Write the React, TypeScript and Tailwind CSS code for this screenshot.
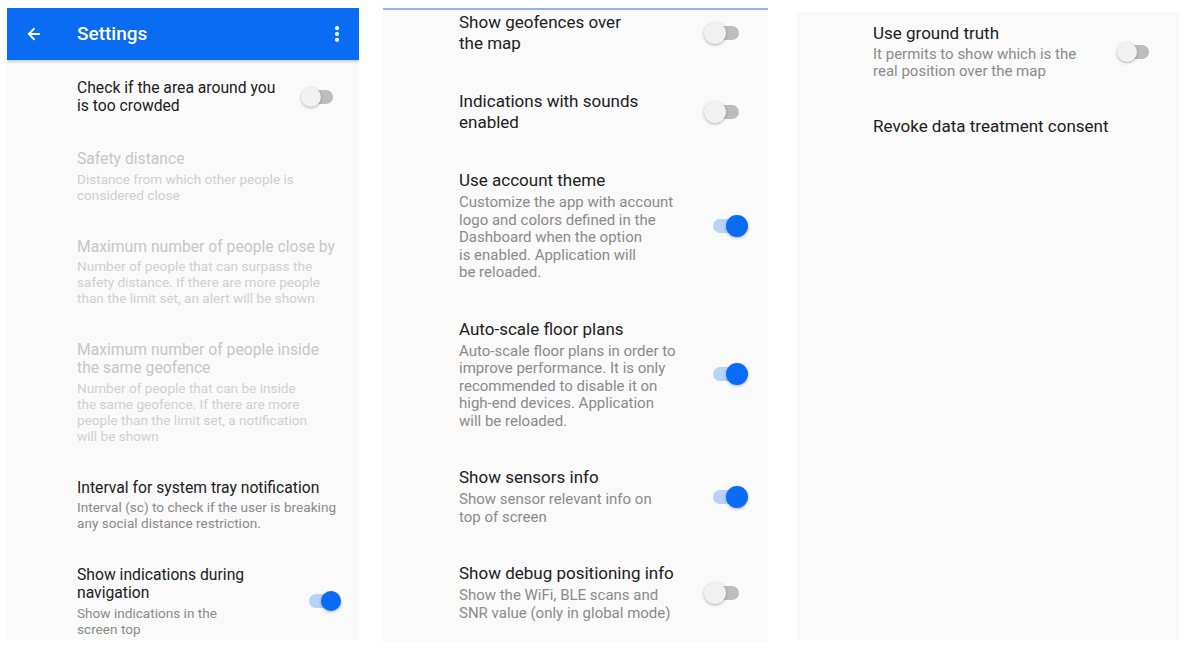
import { ArrowLeft, EllipsisVertical } from "lucide-react";

type Row = {
  title: string[];
  sub?: string[];
  toggle?: "on" | "off";
  disabled?: boolean;
};

const FIRST: Row[] = [
  { title: ["Check if the area around you", "is too crowded"], toggle: "off" },
  {
    title: ["Safety distance"],
    sub: ["Distance from which other people is", "considered close"],
    disabled: true,
  },
  {
    title: ["Maximum number of people close by"],
    sub: [
      "Number of people that can surpass the",
      "safety distance. If there are more people",
      "than the limit set, an alert will be shown",
    ],
    disabled: true,
  },
  {
    title: ["Maximum number of people inside", "the same geofence"],
    sub: [
      "Number of people that can be inside",
      "the same geofence. If there are more",
      "people than the limit set, a notification",
      "will be shown",
    ],
    disabled: true,
  },
  {
    title: ["Interval for system tray notification"],
    sub: ["Interval (sc) to check if the user is breaking", "any social distance restriction."],
  },
  {
    title: ["Show indications during", "navigation"],
    sub: ["Show indications in the", "screen top"],
    toggle: "on",
  },
];

const SECOND: Row[] = [
  { title: ["Show geofences over", "the map"], toggle: "off" },
  { title: ["Indications with sounds", "enabled"], toggle: "off" },
  {
    title: ["Use account theme"],
    sub: [
      "Customize the app with account",
      "logo and colors defined in the",
      "Dashboard when the option",
      "is enabled. Application will",
      "be reloaded.",
    ],
    toggle: "on",
  },
  {
    title: ["Auto-scale floor plans"],
    sub: [
      "Auto-scale floor plans in order to",
      "improve performance. It is only",
      "recommended to disable it on",
      "high-end devices. Application",
      "will be reloaded.",
    ],
    toggle: "on",
  },
  {
    title: ["Show sensors info"],
    sub: ["Show sensor relevant info on", "top of screen"],
    toggle: "on",
  },
  {
    title: ["Show debug positioning info"],
    sub: ["Show the WiFi, BLE scans and", "SNR value (only in global mode)"],
    toggle: "off",
  },
];

const THIRD: Row[] = [
  {
    title: ["Use ground truth"],
    sub: ["It permits to show which is the", "real position over the map"],
    toggle: "off",
  },
  { title: ["Revoke data treatment consent"] },
];

function Toggle({ on, big }: { on: boolean; big?: boolean }) {
  return (
    <div className={`relative shrink-0 ${big ? "h-[22px] w-[44px]" : "h-[20px] w-[40px]"}`}>
      <div
        className={`absolute rounded-full ${big ? "inset-x-[9px] top-[4px] h-[14px]" : "inset-x-[8px] top-[3px] h-[14px]"} ${
          on ? "bg-[#b5d3fb]" : "bg-[#bdbdbd]"
        }`}
      />
      <div
        className={`absolute top-0 rounded-full ${big ? "size-[22px]" : "size-[20px]"} ${
          on
            ? "right-0 bg-[#0a6cf4] shadow-[0_1px_3px_rgba(0,0,0,0.3)]"
            : "left-0 bg-[#f1f1f1] shadow-[0_1px_3px_rgba(0,0,0,0.3)]"
        }`}
      />
    </div>
  );
}

function SettingRow({ row, variant }: { row: Row; variant: "small" | "large" | "third" }) {
  const big = variant !== "small";
  const titleCls = big ? "text-[17px] leading-[21px]" : "text-[15.7px] leading-[18px]";
  const subCls =
    variant === "large"
      ? "text-[15px] leading-[17.5px] mt-[3px]"
      : variant === "third"
        ? "text-[15px] leading-[17px] mt-[2px]"
        : "text-[13.6px] leading-[16px] mt-[2.5px]";
  return (
    <div className="flex items-center justify-between">
      <div className="whitespace-nowrap">
        <div className={`${titleCls} ${row.disabled ? "text-[#c6c6c6]" : "text-[#202020]"}`}>
          {row.title.map((l) => (
            <div key={l}>{l}</div>
          ))}
        </div>
        {row.sub && (
          <div className={`${subCls} ${row.disabled ? "text-[#cfcfcf]" : "text-[#8a8a8a]"}`}>
            {row.sub.map((l) => (
              <div key={l}>{l}</div>
            ))}
          </div>
        )}
      </div>
      {row.toggle && <Toggle on={row.toggle === "on"} big={variant === "large"} />}
    </div>
  );
}

export default function App() {
  return (
    <div
      className="flex h-[652px] w-[1196px] items-start overflow-hidden bg-white"
      style={{ fontFamily: "Roboto, 'Liberation Sans', sans-serif" }}
    >
      {/* First screen with app bar */}
      <section className="ml-[7px] mt-[8px] h-[632px] w-[352px] overflow-hidden bg-[#fafafa]">
        <header className="flex h-[52px] items-center bg-[#0a6cf2] text-white shadow-[0_2px_3px_rgba(0,0,0,0.18)]">
          <ArrowLeft className="ml-[18px] size-[18px]" strokeWidth={2.4} />
          <h1 className="ml-[34px] flex-1 text-[19px] font-medium">Settings</h1>
          <EllipsisVertical className="mr-[12px] size-[20px]" strokeWidth={3} />
        </header>
        <div className="flex flex-col gap-[35px] pl-[70px] pr-[18px] pt-[19px]">
          {FIRST.map((row) => (
            <SettingRow key={row.title[0]} row={row} variant="small" />
          ))}
        </div>
      </section>

      {/* Second screen, scrolled */}
      <section className="ml-[24px] mt-[8px] h-[634px] w-[385px] overflow-hidden border-t-2 border-[#8ab6f2] bg-[#fafafa]">
        <div className="flex flex-col gap-[37px] pl-[76px] pr-[20px] pt-[2px]">
          {SECOND.map((row) => (
            <SettingRow key={row.title[0]} row={row} variant="large" />
          ))}
        </div>
      </section>

      {/* Third screen */}
      <section className="ml-[29px] mt-[12px] h-[628px] w-[382px] bg-[#fafafa]">
        <div className="flex flex-col gap-[36px] pl-[76px] pr-[22px] pt-[11px]">
          {THIRD.map((row) => (
            <SettingRow key={row.title[0]} row={row} variant="third" />
          ))}
        </div>
      </section>
    </div>
  );
}
